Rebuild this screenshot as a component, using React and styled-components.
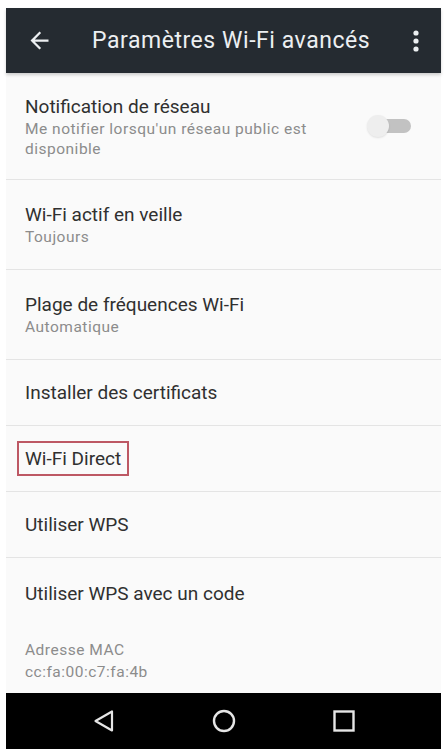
import React from 'react';
import styled, { createGlobalStyle } from 'styled-components';

const GlobalStyle = createGlobalStyle`
  html, body {
    margin: 0;
    padding: 0;
    background: #ffffff;
  }
  body {
    font-family: Roboto, "Noto Sans", "Liberation Sans", sans-serif;
  }
`;

const Phone = styled.div`
  width: 435px;
  margin: 8px 0 0 6px;
  display: flex;
  flex-direction: column;
  background: #fafafa;
`;

const AppBar = styled.header`
  height: 65px;
  display: flex;
  align-items: center;
  background: #252b31;
  color: #eceff1;
  box-shadow: 0 2px 3px rgba(0, 0, 0, 0.18);
  position: relative;
  z-index: 1;
`;

const IconButton = styled.div`
  width: ${(p) => p.width || 48}px;
  height: 48px;
  display: flex;
  align-items: center;
  justify-content: center;
  flex-shrink: 0;
`;

const Title = styled.h1`
  flex: 1;
  margin: 0 0 0 20px;
  font-size: 23px;
  font-weight: 400;
  letter-spacing: 0.55px;
  white-space: nowrap;
`;

const List = styled.div`
  display: flex;
  flex-direction: column;
`;

const Row = styled.div`
  height: ${(p) => p.h}px;
  box-sizing: border-box;
  display: flex;
  align-items: center;
  padding: 0 30px 0 19px;
  border-bottom: ${(p) => (p.last ? 'none' : '1px solid #e4e4e4')};
`;

const RowText = styled.div`
  flex: 1;
  display: flex;
  flex-direction: column;
  padding-right: ${(p) => (p.withSwitch ? 36 : 0)}px;
`;

const RowTitle = styled.div`
  font-size: 19px;
  line-height: 25px;
  color: #303030;
`;

const RowSub = styled.div`
  font-size: 15.5px;
  line-height: ${(p) => p.lh || 20}px;
  letter-spacing: 0.5px;
  color: #8c8c8c;
`;

const Highlight = styled.span`
  align-self: flex-start;
  margin: 0 0 0 -8px;
  padding: 3px 6px;
  border: 2px solid #bd5864;
`;

const Switch = styled.div`
  position: relative;
  width: 44px;
  height: 22px;
  flex-shrink: 0;
`;

const Track = styled.div`
  position: absolute;
  left: 10px;
  right: 0;
  top: 4px;
  height: 14px;
  border-radius: 7px;
  background: #c2c2c2;
`;

const Thumb = styled.div`
  position: absolute;
  left: 0;
  top: 0;
  width: 22px;
  height: 22px;
  border-radius: 50%;
  background: #eeeeee;
  box-shadow: 0 1px 2px rgba(0, 0, 0, 0.1);
`;

const NavBar = styled.nav`
  height: 56px;
  display: grid;
  grid-template-columns: repeat(3, 120px);
  justify-content: center;
  align-items: center;
  background: #000;
`;

const NavSlot = styled.div`
  display: flex;
  align-items: center;
  justify-content: center;
`;

const BackArrow = () => (
  <svg width="27" height="27" viewBox="0 0 24 24" fill="#eceff1">
    <path d="M20 11H7.83l5.59-5.59L12 4l-8 8 8 8 1.41-1.41L7.83 13H20v-2z" />
  </svg>
);

const Kebab = () => (
  <svg width="8" height="24" viewBox="0 0 8 24" fill="#eceff1">
    <circle cx="4" cy="4" r="2.6" />
    <circle cx="4" cy="12" r="2.6" />
    <circle cx="4" cy="20" r="2.6" />
  </svg>
);

const rows = [
  { title: 'Wi-Fi actif en veille', sub: 'Toujours', h: 90 },
  { title: 'Plage de fréquences Wi-Fi', sub: 'Automatique', h: 90 },
  { title: 'Installer des certificats', h: 66 },
  { title: 'Wi-Fi Direct', h: 66, boxed: true },
  { title: 'Utiliser WPS', h: 66 },
  { title: 'Utiliser WPS avec un code', h: 70, last: true },
];

export default function App() {
  return (
    <>
      <GlobalStyle />
      <Phone>
        <AppBar>
          <IconButton width={66}>
            <BackArrow />
          </IconButton>
          <Title>Paramètres Wi-Fi avancés</Title>
          <IconButton width={50}>
            <Kebab />
          </IconButton>
        </AppBar>

        <List>
          <Row h={107}>
            <RowText withSwitch>
              <RowTitle>Notification de réseau</RowTitle>
              <RowSub>Me notifier lorsqu'un réseau public est disponible</RowSub>
            </RowText>
            <Switch>
              <Track />
              <Thumb />
            </Switch>
          </Row>

          {rows.map((r) => (
            <Row key={r.title} h={r.h} last={r.last}>
              <RowText>
                {r.boxed ? (
                  <RowTitle as={Highlight}>{r.title}</RowTitle>
                ) : (
                  <RowTitle>{r.title}</RowTitle>
                )}
                {r.sub && <RowSub>{r.sub}</RowSub>}
              </RowText>
            </Row>
          ))}

          <Row h={65} last>
            <RowText>
              <RowSub lh={22}>Adresse MAC</RowSub>
              <RowSub lh={22}>cc:fa:00:c7:fa:4b</RowSub>
            </RowText>
          </Row>
        </List>

        <NavBar>
          <NavSlot>
            <svg width="24" height="24" viewBox="0 0 24 24" fill="none" stroke="#e6e6e6" strokeWidth="2.2" strokeLinejoin="round">
              <path d="M20 2.5v19L3.5 12z" />
            </svg>
          </NavSlot>
          <NavSlot>
            <svg width="24" height="24" viewBox="0 0 24 24" fill="none" stroke="#e6e6e6" strokeWidth="2.4">
              <circle cx="12" cy="12" r="10" />
            </svg>
          </NavSlot>
          <NavSlot>
            <svg width="24" height="24" viewBox="0 0 24 24" fill="none" stroke="#e6e6e6" strokeWidth="2.4">
              <rect x="2.5" y="2.5" width="19" height="19" />
            </svg>
          </NavSlot>
        </NavBar>
      </Phone>
    </>
  );
}
